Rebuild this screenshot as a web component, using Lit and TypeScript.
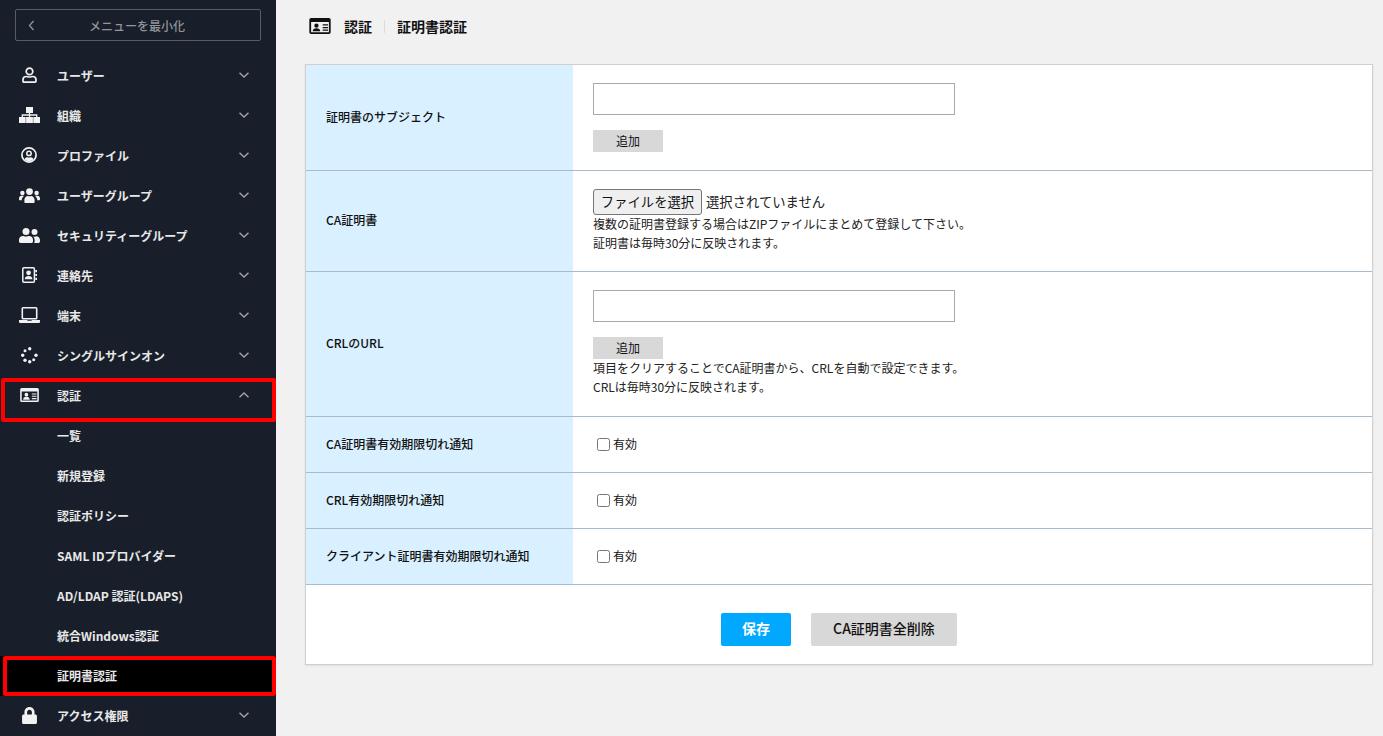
import { LitElement, html, css, svg } from "lit";
import { customElement } from "lit/decorators.js";

// icons are hand drawn, each one in its own viewBox
const idCard = (w: number, h: number) => html`<svg width=${w} height=${h} viewBox="0 0 24 18">
  <path fill="currentColor" fill-rule="evenodd" d="M2 0h20a2 2 0 0 1 2 2v14a2 2 0 0 1-2 2H2a2 2 0 0 1-2-2V2a2 2 0 0 1 2-2zM2 4.5V16h20V4.5z" />
  <circle cx="8" cy="8.6" r="2.4" fill="currentColor" />
  <path fill="currentColor" d="M3.8 15c0-2.4 1.6-3.6 4.2-3.6s4.2 1.2 4.2 3.6z" />
  <path fill="currentColor" d="M15 7h6v1.4h-6zM15 10h6v1.4h-6zM15 13h6v1.4h-6z" />
</svg>`;

const icons: Record<string, unknown> = {
  user: html`<svg width="15" height="16" viewBox="0 0 15 16">
    <circle cx="7.5" cy="4.4" r="3.3" fill="none" stroke="currentColor" stroke-width="1.7" />
    <path fill="none" stroke="currentColor" stroke-width="1.7" d="M1 14.2v-1.4c0-2 1.5-3.3 3.3-3.3 1.2 0 1.8.5 3.2.5s2-.5 3.2-.5c1.8 0 3.3 1.3 3.3 3.3v1.4c0 .5-.3.9-.9.9H1.9c-.6 0-.9-.4-.9-.9z" />
  </svg>`,
  sitemap: html`<svg width="21" height="16" viewBox="0 0 21 16">
    <path fill="currentColor" d="M7 0h7v6H7zM0 10h6.7v6H0zM7.1 10h6.8v6H7.1zM14.3 10H21v6h-6.7z" />
    <path fill="none" stroke="currentColor" stroke-width="1.3" d="M3.3 10V8h14.4v2M10.5 6v4" />
  </svg>`,
  profile: html`<svg width="16" height="16" viewBox="0 0 16 16">
    <circle cx="8" cy="8" r="7.1" fill="none" stroke="currentColor" stroke-width="1.7" />
    <circle cx="8" cy="6.4" r="2.2" fill="none" stroke="currentColor" stroke-width="1.5" />
    <path fill="currentColor" d="M3.4 12.2c.8-1.4 2-2 3-2 .6 0 .9.3 1.6.3s1-.3 1.6-.3c1 0 2.2.6 3 2-1.1 1.2-2.8 2-4.6 2s-3.5-.8-4.6-2z" />
  </svg>`,
  users: html`<svg width="21" height="15" viewBox="0 0 21 15">
    <circle cx="10.5" cy="3.6" r="3.4" fill="currentColor" />
    <circle cx="3.4" cy="5" r="2.2" fill="currentColor" />
    <circle cx="17.6" cy="5" r="2.2" fill="currentColor" />
    <path fill="currentColor" d="M5.4 14v-2c0-2.2 1.6-4 3.6-4 .5 0 1 .3 1.5.3S11.5 8 12 8c2 0 3.6 1.8 3.6 4v2c0 .6-.4 1-1 1H6.4c-.6 0-1-.4-1-1z" />
    <path fill="currentColor" d="M0 10.6C0 9 1 7.8 2.4 7.8h1.700c.3 0 .6.1.9.3-1.3.9-2.100 2.400-2.300 4.100H1c-.6 0-1-.4-1-1zM21 10.600C21 9 20 7.800 18.600 7.800h-1.700c-.3 0-.6.1-.9.3 1.300.9 2.100 2.400 2.300 4.100H20c.6 0 1-.4 1-1z" />
  </svg>`,
  friends: html`<svg width="21" height="15" viewBox="0 0 21 15">
    <circle cx="7" cy="3.6" r="3.5" fill="currentColor" />
    <circle cx="15.5" cy="4" r="3" fill="currentColor" />
    <path fill="currentColor" d="M0 13.2v-1.400C0 9.600 1.800 8 4 8c.8 0 1.700.5 3 .5S9.200 8 10 8c2.200 0 4 1.600 4 3.800v1.800c0 .8-.6 1.400-1.400 1.400H1.400C.6 15 0 14.400 0 13.600z" />
    <path fill="currentColor" d="M15 15h4.600c.8 0 1.400-.6 1.400-1.400v-1C21 10 19.500 8.300 17.500 8.300c-.8 0-1.200.4-2 .4-.5 0-1-.2-1.500-.3 1 .9 1.600 2.200 1.600 3.500v2z" />
  </svg>`,
  contact: html`<svg width="15" height="16" viewBox="0 0 15 16">
    <rect x=".8" y=".8" width="11.6" height="14.4" rx="1" fill="none" stroke="currentColor" stroke-width="1.5" />
    <circle cx="6.6" cy="5.8" r="2.4" fill="currentColor" />
    <path fill="currentColor" d="M2.8 12.2c0-2 1.500-3.200 3.800-3.200s3.800 1.200 3.800 3.200z" />
    <path fill="currentColor" d="M13.3 3H15v2.200h-1.700zM13.3 6.900H15v2.200h-1.700zM13.3 10.800H15V13h-1.700z" />
  </svg>`,
  laptop: html`<svg width="21" height="16" viewBox="0 0 21 16">
    <rect x="3.3" y=".8" width="14.4" height="11" rx=".8" fill="none" stroke="currentColor" stroke-width="1.6" />
    <path fill="currentColor" d="M0 13h8l.6.8h3.800L13 13h8v1.400c0 .9-.6 1.600-1.400 1.600H1.400C.6 16 0 15.300 0 14.400z" />
  </svg>`,
  spinner: html`<svg width="17" height="17" viewBox="0 0 17 17" fill="currentColor">
    <circle cx="8.7" cy="1.8" r="1.7" />
    <circle cx="4" cy="3.8" r="1.5" />
    <circle cx="1.7" cy="8.2" r="1.7" />
    <circle cx="4" cy="13.2" r="1.7" />
    <circle cx="8.7" cy="14.8" r="1.7" />
    <circle cx="12.7" cy="12.8" r="1.5" />
    <circle cx="15" cy="8.2" r="1.7" />
  </svg>`,
  id: idCard(19, 14),
  lock: html`<svg width="15" height="17" viewBox="0 0 448 512">
    <path fill="currentColor" d="M400 224h-24v-72C376 68.200 307.800 0 224 0S72 68.200 72 152v72H48c-26.500 0-48 21.500-48 48v192c0 26.500 21.500 48 48 48h352c26.500 0 48-21.500 48-48V272c0-26.500-21.500-48-48-48zm-104 0H152v-72c0-39.700 32.300-72 72-72s72 32.300 72 72v72z" />
  </svg>`,
};

const chevron = (path: string) => html`<svg class="chev" width="10" height="6" viewBox="0 0 10 6">
  ${svg`<path d=${path} fill="none" stroke="currentColor" stroke-width="1.3" />`}
</svg>`;

const DOWN = "M.5 .7 5 5 9.5 .7";
const UP = "M.5 5.3 5 1l4.5 4.3";

type NavItem = { icon: string; label: string; open?: boolean };

const before: NavItem[] = [
  { icon: "user", label: "ユーザー" },
  { icon: "sitemap", label: "組織" },
  { icon: "profile", label: "プロファイル" },
  { icon: "users", label: "ユーザーグループ" },
  { icon: "friends", label: "セキュリティーグループ" },
  { icon: "contact", label: "連絡先" },
  { icon: "laptop", label: "端末" },
  { icon: "spinner", label: "シングルサインオン" },
  { icon: "id", label: "認証", open: true },
];

const subItems = ["一覧", "新規登録", "認証ポリシー", "SAML IDプロバイダー", "AD/LDAP 認証(LDAPS)", "統合Windows認証", "証明書認証"];

@customElement("app-root")
export class AppRoot extends LitElement {
  static styles = css`
    :host {
      display: flex;
      height: 736px;
      overflow: hidden;
      background: #f1f1f1;
      font-family: "Noto Sans CJK JP", "Noto Sans", sans-serif;
      font-size: 12px;
      color: #111;
    }

    /* サイドバー */
    .side {
      width: 276px;
      flex: none;
      background: #181f2a;
      color: #e8e8e8;
      padding-top: 9px;
      box-sizing: border-box;
      overflow: hidden;
    }
    .collapse {
      display: flex;
      align-items: center;
      height: 32px;
      box-sizing: border-box;
      margin: 0 15px 15px;
      padding: 0 12px;
      border: 1px solid #585c64;
      border-radius: 2px;
      color: #92959a;
      font-weight: 500;
    }
    .collapse span {
      flex: 1;
      text-align: center;
      padding-right: 9px;
    }
    .row {
      position: relative;
      display: flex;
      align-items: center;
      height: 40px;
      box-sizing: border-box;
      padding: 0 0 2px 57px;
      font-weight: 700;
    }
    .icon {
      position: absolute;
      left: 13px;
      width: 32px;
      display: flex;
      justify-content: center;
      color: #f2f2f2;
    }
    .chev {
      position: absolute;
      left: 239px;
      top: 16px;
      color: #a4a6aa;
    }
    .selected {
      background: #000;
    }
    .mark {
      position: absolute;
      border: 4px solid #f00;
      box-sizing: border-box;
      border-radius: 2px;
    }
    .mark-parent {
      left: 1px;
      top: 2px;
      width: 275px;
      height: 44px;
    }
    .mark-child {
      left: 3px;
      top: 0;
      width: 273px;
      height: 40px;
    }

    /* メイン */
    .main {
      flex: 1;
      min-width: 0;
      padding: 0 10px 0 29px;
    }
    .head {
      display: flex;
      align-items: center;
      height: 64px;
      padding: 0 0 12px 4px;
      box-sizing: border-box;
      font-size: 14px;
      font-weight: 700;
      color: #111;
    }
    .head .title {
      margin-left: 13px;
    }
    .head .sep {
      width: 1px;
      height: 13px;
      margin: 0 12px;
      background: #dcdcdc;
    }
    .card {
      background: #fff;
      border: 1px solid #cfcfcf;
      box-shadow: 0 1px 2px rgba(0, 0, 0, 0.08);
    }
    .line {
      display: flex;
      border-bottom: 1px solid #a9bac8;
    }
    .label {
      width: 267px;
      flex: none;
      display: flex;
      align-items: center;
      box-sizing: border-box;
      padding: 0 0 3px 20px;
      background: #d8f0ff;
      font-weight: 500;
    }
    .value {
      flex: 1;
      padding: 18px 20px;
    }
    .value.check {
      display: flex;
      align-items: center;
      height: 55px;
      box-sizing: border-box;
      padding: 0 0 0 24px;
    }
    .check input {
      width: 13px;
      height: 13px;
      margin: 0 3px 0 0;
    }
    .check span {
      margin-top: -2px;
    }
    .text-input {
      display: block;
      width: 362px;
      height: 32px;
      box-sizing: border-box;
      border: 1px solid #a9a9a9;
      background: #fff;
    }
    .add {
      display: block;
      width: 70px;
      height: 22px;
      margin-top: 15px;
      padding: 0 0 2px;
      border: 0;
      background: #d8d8d8;
      font: inherit;
      color: #111;
    }
    .file {
      display: flex;
      align-items: center;
      gap: 4px;
      font-size: 13.333px;
      color: #222;
    }
    .file span {
      margin-top: -2px;
    }
    .file button {
      width: 109px;
      height: 26px;
      padding: 0 0 2px;
      box-sizing: border-box;
      border: 1px solid #767676;
      border-radius: 3px;
      background: #efefef;
      font: inherit;
      color: #111;
    }
    .note {
      line-height: 19px;
      margin: -1px 0 1px;
      color: #222;
    }
    .note.tall {
      margin-bottom: 2px;
    }
    .foot {
      display: flex;
      justify-content: center;
      gap: 20px;
      padding: 28px 0 18px;
    }
    .foot button {
      height: 33px;
      border: 0;
      border-radius: 2px;
      padding: 0 0 3px;
      font-family: inherit;
      font-size: 14px;
    }
    .save {
      width: 70px;
      background: #00a8ff;
      color: #fff;
      font-weight: 700;
    }
    .wipe {
      width: 146px;
      background: #d8d8d8;
      color: #111;
      font-weight: 500;
    }
  `;

  private navRow(item: NavItem) {
    return html`<div class="row">
      <span class="icon">${icons[item.icon]}</span>
      ${item.label} ${chevron(item.open ? UP : DOWN)}
      ${item.open ? html`<span class="mark mark-parent"></span>` : ""}
    </div>`;
  }

  private checkLine(label: string) {
    return html`<div class="line">
      <div class="label">${label}</div>
      <div class="value check"><input type="checkbox" /><span>有効</span></div>
    </div>`;
  }

  render() {
    return html`
      <nav class="side">
        <div class="collapse">
          <svg width="7" height="11" viewBox="0 0 7 11"><path d="M5.5 1 1.500 5.500l4 4.500" fill="none" stroke="currentColor" stroke-width="1.3" /></svg>
          <span>メニューを最小化</span>
        </div>
        ${before.map((item) => this.navRow(item))}
        ${subItems.map(
          (label) => label === "証明書認証"
            ? html`<div class="row selected">${label}<span class="mark mark-child"></span></div>`
            : html`<div class="row">${label}</div>`,
        )}
        ${this.navRow({ icon: "lock", label: "アクセス権限" })}
      </nav>
      <main class="main">
        <header class="head">
          ${idCard(22, 16)}
          <span class="title">認証</span>
          <span class="sep"></span>
          <span>証明書認証</span>
        </header>
        <section class="card">
          <div class="line">
            <div class="label">証明書のサブジェクト</div>
            <div class="value">
              <input class="text-input" type="text" />
              <button class="add">追加</button>
            </div>
          </div>
          <div class="line">
            <div class="label">CA証明書</div>
            <div class="value">
              <div class="file"><button>ファイルを選択</button><span>選択されていません</span></div>
              <div class="note">複数の証明書登録する場合はZIPファイルにまとめて登録して下さい。<br />証明書は毎時30分に反映されます。</div>
            </div>
          </div>
          <div class="line">
            <div class="label">CRLのURL</div>
            <div class="value">
              <input class="text-input" type="text" />
              <button class="add">追加</button>
              <div class="note tall">項目をクリアすることでCA証明書から、CRLを自動で設定できます。<br />CRLは毎時30分に反映されます。</div>
            </div>
          </div>
          ${this.checkLine("CA証明書有効期限切れ通知")}
          ${this.checkLine("CRL有効期限切れ通知")}
          ${this.checkLine("クライアント証明書有効期限切れ通知")}
          <div class="foot">
            <button class="save">保存</button>
            <button class="wipe">CA証明書全削除</button>
          </div>
        </section>
      </main>
    `;
  }
}
